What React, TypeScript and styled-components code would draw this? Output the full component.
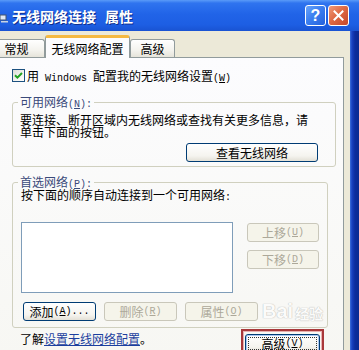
import React from 'react';
import styled, { createGlobalStyle } from 'styled-components';

const CJK = `"Noto Sans CJK SC", "Noto Sans", sans-serif`;

const Global = createGlobalStyle`
  html, body { margin: 0; padding: 0; background: #ece9d8; }
  body { font-family: ${CJK}; font-size: 12px; color: #000; }
  * { box-sizing: border-box; }
`;

const Window = styled.div`
  position: relative;
  width: 359px;
  height: 350px;
  overflow: hidden;
  display: flex;
  flex-direction: column;
  background: #ece9d8;
`;

const TitleBar = styled.div`
  flex: none;
  height: 31px;
  display: flex;
  align-items: center;
  background: linear-gradient(180deg, #5a9bf8 0%, #2f74ef 10%, #2164e8 45%, #1d5ee3 80%, #1953d2 100%);
`;

const TitleIcon = styled.svg`
  flex: none;
  width: 9px;
  height: 10px;
  margin-top: 4px;
`;

const TitleText = styled.div`
  display: flex;
  gap: 9px;
  margin-left: 3px;
  font-family: ${CJK};
  font-weight: 700;
  font-size: 14px;
  line-height: 16px;
  color: #fff;
  text-shadow: 1px 1px 0 #0f2f8f;
`;

const TitleButtons = styled.div`
  margin-left: auto;
  margin-right: 10px;
  display: flex;
  gap: 2px;
`;

const CapButton = styled.div<{ $kind: 'help' | 'close' }>`
  width: 21px;
  height: 21px;
  border: 1px solid #fff;
  border-radius: 3px;
  display: flex;
  align-items: center;
  justify-content: center;
  background: ${(p) =>
    p.$kind === 'help'
      ? 'linear-gradient(135deg, #6aa4fa 0%, #3c7ff0 45%, #2460dc 100%)'
      : 'linear-gradient(135deg, #f09a78 0%, #df6a45 45%, #c4462a 100%)'};
  color: #fff;
  font-family: "Liberation Sans", sans-serif;
  font-weight: 700;
  font-size: 16px;
  line-height: 1;
`;

const Body = styled.div`
  flex: 1;
  display: flex;
  min-height: 0;
`;

const Content = styled.div`
  flex: 1;
  margin-left: -12px;
  display: flex;
  flex-direction: column;
  min-width: 0;
`;

const Frame = styled.div`
  flex: none;
  width: 9px;
  background: linear-gradient(90deg, #3d6fdc 0, #1840bf 2px, #0c2c9e 5px, #0a2a90 100%);
`;

const TabStrip = styled.div`
  flex: none;
  height: 26px;
  display: flex;
  align-items: flex-end;
  position: relative;
  z-index: 1;
`;

const Tab = styled.div<{ $w: number; $active?: boolean }>`
  width: ${(p) => p.$w}px;
  display: flex;
  justify-content: center;
  font-size: 12px;
  line-height: 14px;
  color: #000;
  border: 1px solid #919b9c;
  border-bottom: none;
  border-radius: 3px 3px 0 0;
  ${(p) =>
    p.$active
      ? `
    height: 23px;
    margin-bottom: -1px;
    padding-top: 4px;
    border-top: 3px solid #f5b942;
    background: #fcfcfe;
  `
      : `
    height: 18px;
    padding-top: 2px;
    background: linear-gradient(180deg, #ffffff 0%, #f4f3ee 60%, #e6e4da 100%);
  `}
`;

const Panel = styled.div`
  flex: 1;
  margin-right: 6px;
  border: 1px solid #919b9c;
  border-bottom: none;
  background: linear-gradient(180deg, #fcfcfe 0%, #f7f7f3 100%);
  padding: 11px 0 0 23px;
  display: flex;
  flex-direction: column;
`;

const Mn = styled.span`
  font-family: "Liberation Mono", "DejaVu Sans Mono", monospace;
  font-size: 10px;
  line-height: 0;
`;

const Key = styled.span`
  text-decoration: underline;
`;

const CheckRow = styled.div`
  display: flex;
  align-items: center;
  gap: 2px;
  height: 13px;
  line-height: 14px;
  white-space: nowrap;
`;

const CheckBox = styled.div`
  width: 13px;
  height: 13px;
  border: 1px solid #1c5180;
  background: linear-gradient(135deg, #dcdcd7 0%, #f4f4f0 60%, #ffffff 100%);
  display: flex;
  align-items: center;
  justify-content: center;
`;

const Group = styled.fieldset<{ $w: number; $mt: number }>`
  width: ${(p) => p.$w}px;
  margin: ${(p) => p.$mt}px 0 0 0;
  padding: 0;
  border: 1px solid #d0d0bf;
  border-radius: 3px;
  min-width: 0;
`;

const Legend = styled.legend`
  margin-left: 5px;
  padding: 0 2px;
  height: 14px;
  font-size: 12px;
  line-height: 14px;
  color: #3a4a7a;
`;

const GroupInner = styled.div<{ $pad: string }>`
  padding: ${(p) => p.$pad};
  display: flex;
  flex-direction: column;
`;

const Para = styled.div`
  font-size: 12px;
  line-height: 12px;
  white-space: nowrap;
`;

const Btn = styled.div<{ $w: number; $disabled?: boolean }>`
  flex: none;
  width: ${(p) => p.$w}px;
  height: 19px;
  border: 1px solid ${(p) => (p.$disabled ? '#c9c7ba' : '#003c74')};
  border-radius: 3px;
  background: ${(p) =>
    p.$disabled
      ? '#f5f4ea'
      : 'linear-gradient(180deg, #ffffff 0%, #f5f4ef 70%, #e3e0d6 100%)'};
  color: ${(p) => (p.$disabled ? '#aca899' : '#000')};
  display: flex;
  align-items: center;
  justify-content: center;
  font-size: 12px;
  line-height: 14px;
  white-space: nowrap;
`;

const BtnRow = styled.div<{ $mt: number; $justify?: string; $gap?: number }>`
  display: flex;
  margin-top: ${(p) => p.$mt}px;
  justify-content: ${(p) => p.$justify || 'flex-start'};
  gap: ${(p) => p.$gap || 0}px;
`;

const ListArea = styled.div`
  display: flex;
  gap: 14px;
  margin-top: 21px;
`;

const ListBox = styled.div`
  width: 212px;
  height: 71px;
  border: 1px solid #7f9db9;
  background: #fff;
`;

const SideButtons = styled.div`
  display: flex;
  flex-direction: column;
  gap: 8px;
  padding-top: 1px;
`;

const FooterRow = styled.div`
  display: flex;
  align-items: flex-start;
  margin-top: 1px;
`;

const FooterText = styled.div`
  margin-left: 8px;
  padding-top: 3px;
  line-height: 14px;
  white-space: nowrap;
`;

const Link = styled.span`
  color: #1b3f9e;
  text-decoration: underline;
`;

const Highlight = styled.div`
  margin-left: auto;
  margin-right: 19px;
  border: 2px solid #a8383a;
  box-shadow: inset 0 0 0 1px #e9b0b0;
  padding: 3px 2px 0 2px;
  height: 30px;
`;

const FocusBtn = styled(Btn)`
  padding: 2px;
  border-color: #003c74;
  box-shadow: inset 0 0 0 1px #a9c6f2;
`;

const FocusRing = styled.div`
  flex: 1;
  align-self: stretch;
  border: 1px dotted #333;
  display: flex;
  align-items: center;
  justify-content: center;
`;

const Watermark = styled.div`
  position: absolute;
  left: 262px;
  top: 300px;
  display: flex;
  align-items: flex-end;
  gap: 2px;
  opacity: 0.5;
  color: #fff;
  text-shadow: 0 0 1px #8a8a8a, 0 0 1px #8a8a8a;
  pointer-events: none;
`;

const WmLatin = styled.span`
  font-family: "Liberation Sans", sans-serif;
  font-weight: 700;
  font-size: 20px;
  line-height: 22px;
`;

const WmCjk = styled.span`
  font-family: ${CJK};
  font-weight: 700;
  font-size: 14px;
  line-height: 18px;
`;

export default function App() {
  return (
    <>
      <Global />
      <Window>
        <TitleBar>
          <TitleIcon viewBox="0 0 9 10">
            <rect x="0" y="2" width="6" height="5" fill="#dfe8f5" stroke="#44556e" strokeWidth="1" />
            <rect x="1" y="8" width="7" height="1.5" fill="#c9d4e4" />
          </TitleIcon>
          <TitleText>
            <span>无线网络连接</span>
            <span>属性</span>
          </TitleText>
          <TitleButtons>
            <CapButton $kind="help">?</CapButton>
            <CapButton $kind="close">
              <svg width="11" height="11" viewBox="0 0 11 11">
                <path d="M1.5 1.5 L9.5 9.5 M9.5 1.5 L1.5 9.5" stroke="#fff" strokeWidth="2" strokeLinecap="square" />
              </svg>
            </CapButton>
          </TitleButtons>
        </TitleBar>
        <Body>
          <Content>
            <TabStrip>
              <Tab $w={57}>常规</Tab>
              <Tab $w={85} $active>无线网络配置</Tab>
              <Tab $w={45}>高级</Tab>
            </TabStrip>
            <Panel>
              <CheckRow>
                <CheckBox>
                  <svg width="9" height="9" viewBox="0 0 9 9">
                    <path d="M1 4.2 L3.4 6.6 L8 2" fill="none" stroke="#21a121" strokeWidth="2" />
                  </svg>
                </CheckBox>
                <span>
                  用<Mn> Windows </Mn>配置我的无线网络设置<Mn>(<Key>W</Key>)</Mn>
                </span>
              </CheckRow>

              <Group $w={324} $mt={13}>
                <Legend>
                  可用网络<Mn>(<Key>N</Key>):</Mn>
                </Legend>
                <GroupInner $pad="5px 17px 4px 7px">
                  <Para>
                    要连接、断开区域内无线网络或查找有关更多信息，请
                    <br />
                    单击下面的按钮。
                  </Para>
                  <BtnRow $mt={5} $justify="flex-end">
                    <Btn $w={132}>查看无线网络</Btn>
                  </BtnRow>
                </GroupInner>
              </Group>

              <Group $w={316} $mt={8}>
                <Legend>
                  首选网络<Mn>(<Key>P</Key>):</Mn>
                </Legend>
                <GroupInner $pad="0 0 6px 8px">
                  <Para>
                    按下面的顺序自动连接到一个可用网络<Mn>:</Mn>
                  </Para>
                  <ListArea>
                    <ListBox />
                    <SideButtons>
                      <Btn $w={72} $disabled>
                        上移<Mn>(<Key>U</Key>)</Mn>
                      </Btn>
                      <Btn $w={72} $disabled>
                        下移<Mn>(<Key>D</Key>)</Mn>
                      </Btn>
                    </SideButtons>
                  </ListArea>
                  <BtnRow $mt={9} $gap={8}>
                    <Btn $w={73} style={{ marginLeft: 2 }}>
                      添加<Mn>(<Key>A</Key>)...</Mn>
                    </Btn>
                    <Btn $w={73} $disabled>
                      删除<Mn>(<Key>R</Key>)</Mn>
                    </Btn>
                    <Btn $w={73} $disabled>
                      属性<Mn>(<Key>O</Key>)</Mn>
                    </Btn>
                  </BtnRow>
                </GroupInner>
              </Group>

              <FooterRow>
                <FooterText>
                  了解<Link>设置无线网络配置</Link>。
                </FooterText>
                <Highlight>
                  <FocusBtn $w={75}>
                    <FocusRing>
                      高级<Mn>(<Key>V</Key>)</Mn>
                    </FocusRing>
                  </FocusBtn>
                </Highlight>
              </FooterRow>
            </Panel>
          </Content>
          <Frame />
        </Body>
        <Watermark>
          <WmLatin>Bai</WmLatin>
          <WmCjk>经验</WmCjk>
        </Watermark>
      </Window>
    </>
  );
}
